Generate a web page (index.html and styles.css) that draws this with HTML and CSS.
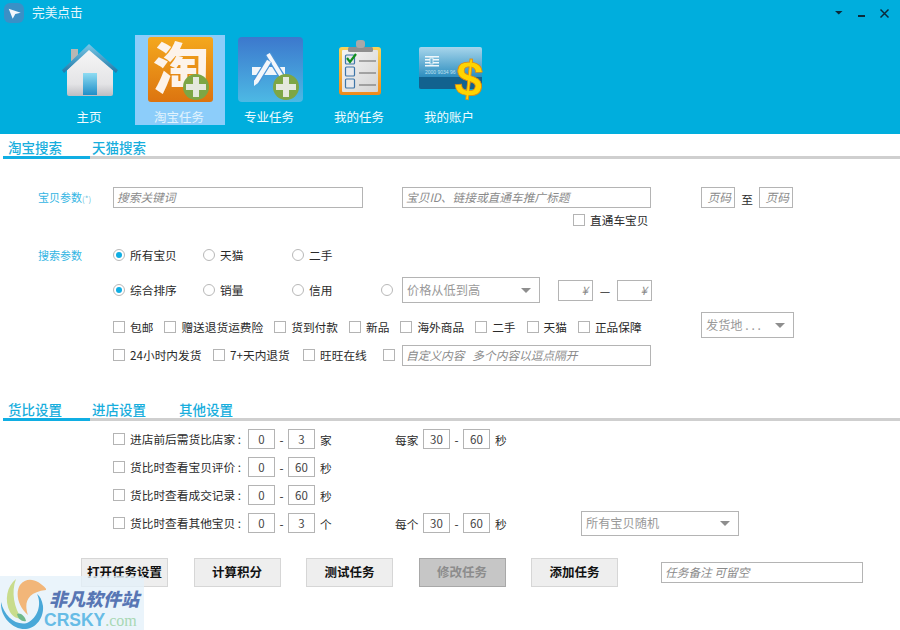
FILE: index.html
```html
<!DOCTYPE html>
<html lang="zh-CN">
<head>
<meta charset="utf-8">
<title>完美点击</title>
<link rel="stylesheet" href="styles.css">
</head>
<body>
<div class="app">
  <header class="head">
    <div class="titlebar">
      <svg class="logo" viewBox="0 0 20 20"><rect x="0" y="0" width="20" height="20" rx="6" fill="#3a90c6"/><path d="M4.700 5.700 L16.700 9.700 L11.300 11 L8.700 15.700 Z" fill="#f2f8fc"/></svg>
      <span class="title">完美点击</span>
      <div class="controls">
        <svg class="ctl" viewBox="0 0 23 20"><path d="M9 7 H16.500 L12.750 10.500 Z" fill="#0b2a3a"/></svg>
        <svg class="ctl" viewBox="0 0 23 20"><rect x="9" y="11" width="7" height="2" fill="#0b2a3a"/></svg>
        <svg class="ctl" viewBox="0 0 23 20"><path d="M8.500 5.500 L16.500 13.500 M16.500 5.500 L8.500 13.500" stroke="#0b2a3a" stroke-width="1.500" fill="none"/></svg>
      </div>
    </div>
    <nav class="nav">
      <a class="nav-item">
        <svg class="nav-icon" viewBox="0 0 90 66">
          <defs>
            <linearGradient id="wall" x1="0" y1="0" x2="0" y2="1"><stop offset="0" stop-color="#f7f7f8"/><stop offset="0.75" stop-color="#e4e4e6"/><stop offset="1" stop-color="#bdbdc2"/></linearGradient>
            <linearGradient id="door" x1="0" y1="0" x2="0" y2="1"><stop offset="0" stop-color="#8fdcf2"/><stop offset="1" stop-color="#1f8fc8"/></linearGradient>
            <linearGradient id="roof" x1="0" y1="0" x2="0" y2="1"><stop offset="0" stop-color="#7cc8e6"/><stop offset="1" stop-color="#1f78a8"/></linearGradient>
          </defs>
          <rect x="26" y="13" width="7" height="12" fill="#b7b7b4"/>
          <path d="M44 12 L68 34 V58 Q68 60 66 60 H24 Q22 60 22 58 V34 Z" fill="url(#wall)"/>
          <path d="M44 8 L73 34 L71 37 L44 14 L19 37 L17 34 Z" fill="url(#roof)"/>
          <rect x="38" y="37" width="14" height="22" fill="url(#door)"/>
        </svg>
        <span class="nav-label">主页</span>
      </a>
      <a class="nav-item active">
        <svg class="nav-icon" viewBox="0 0 90 66">
          <defs>
            <linearGradient id="tao" x1="0" y1="0" x2="0" y2="1"><stop offset="0" stop-color="#f4a81d"/><stop offset="1" stop-color="#dc7410"/></linearGradient>
          </defs>
          <rect x="13" y="1" width="65" height="65" rx="3" fill="url(#tao)"/>
          <text x="46" y="53" class="tao-glyph">淘</text>
          <circle cx="61" cy="51" r="13" fill="#7da645"/>
          <path d="M58 41 H64 V48 H71 V54 H64 V61 H58 V54 H51 V48 H58 Z" fill="#e4e9dd"/>
        </svg>
        <span class="nav-label">淘宝任务</span>
      </a>
      <a class="nav-item">
        <svg class="nav-icon" viewBox="0 0 90 66">
          <defs>
            <linearGradient id="appb" x1="0" y1="0" x2="0" y2="1"><stop offset="0" stop-color="#3c78cd"/><stop offset="1" stop-color="#4db9e4"/></linearGradient>
          </defs>
          <rect x="13" y="1" width="65" height="65" rx="4" fill="url(#appb)"/>
          <rect x="27" y="31" width="33" height="8" fill="#f2f6fa"/>
          <path d="M43 18 L59 44" stroke="#4a94d8" stroke-width="6.500" fill="none"/>
          <path d="M43 18 L59 44" stroke="#f4f7fb" stroke-width="4" fill="none"/>
          <path d="M44 25 L31 46" stroke="#4a94d8" stroke-width="7" fill="none"/>
          <path d="M44 25 L31 46" stroke="#f4f7fb" stroke-width="4.500" fill="none"/>
          <path d="M29 44 L33 47 L29 50 Z" fill="#f4f7fb"/>
          <circle cx="61" cy="51" r="13" fill="#7da645"/>
          <path d="M58 41 H64 V48 H71 V54 H64 V61 H58 V54 H51 V48 H58 Z" fill="#e4e9dd"/>
        </svg>
        <span class="nav-label">专业任务</span>
      </a>
      <a class="nav-item">
        <svg class="nav-icon" viewBox="0 0 90 66">
          <defs>
            <linearGradient id="board" x1="0" y1="0" x2="0" y2="1"><stop offset="0" stop-color="#f7d35a"/><stop offset="1" stop-color="#ef8a1c"/></linearGradient>
            <linearGradient id="sheet" x1="0" y1="0" x2="1" y2="1"><stop offset="0" stop-color="#f4f4f4"/><stop offset="1" stop-color="#d4d4d4"/></linearGradient>
          </defs>
          <rect x="24" y="11" width="42" height="48" rx="3" fill="url(#board)"/>
          <rect x="27" y="14" width="36" height="42" rx="1" fill="url(#sheet)"/>
          <rect x="33" y="11" width="25" height="5" rx="1.500" fill="#8f8f8f"/>
          <rect x="41" y="4" width="9" height="8" rx="3" fill="#a8a8a8"/>
          <g fill="#e6e8ec" stroke="#3f76a8" stroke-width="1.200">
            <rect x="30.500" y="19" width="9" height="9" rx="1"/>
            <rect x="30.500" y="31" width="9" height="9" rx="1"/>
            <rect x="30.500" y="43" width="9" height="9" rx="1"/>
          </g>
          <path d="M32 22 L35 26 L41 18" stroke="#0f8f1d" stroke-width="2.200" fill="none"/>
          <g stroke="#777" stroke-width="1.200">
            <path d="M44 25 H61"/>
            <path d="M44 37 H61"/>
            <path d="M44 49 H61"/>
          </g>
        </svg>
        <span class="nav-label">我的任务</span>
      </a>
      <a class="nav-item">
        <svg class="nav-icon" viewBox="0 0 90 66">
          <defs>
            <linearGradient id="card" x1="0" y1="0" x2="0" y2="1"><stop offset="0" stop-color="#a8d6ec"/><stop offset="0.7" stop-color="#2f8fc0"/><stop offset="1" stop-color="#2a83b4"/></linearGradient>
          </defs>
          <rect x="14" y="11" width="63" height="42" rx="2" fill="url(#card)"/>
          <path d="M14 41 H77 V51 Q77 53 75 53 H16 Q14 53 14 51 Z" fill="#12628f"/>
          <g fill="#eef7fb">
            <rect x="20" y="20" width="14" height="1.500"/>
            <rect x="20" y="23" width="5" height="1.500"/>
            <rect x="28" y="23" width="6" height="1.500"/>
            <rect x="20" y="26" width="5" height="1.500"/>
            <rect x="28" y="26" width="6" height="1.500"/>
            <rect x="20" y="29" width="14" height="1.500"/>
            <rect x="25" y="22" width="3" height="6" fill="none" stroke="#eef7fb" stroke-width="0.800"/>
          </g>
          <text x="20" y="38" class="card-no">2000 9034 96</text>
          <text x="64" y="60" class="dollar" transform="rotate(6 64 45)">$</text>
        </svg>
        <span class="nav-label">我的账户</span>
      </a>
    </nav>
  </header>

  <div class="tabs tabs-top">
    <span class="tab active">淘宝搜索</span>
    <span class="tab">天猫搜索</span>
  </div>

  <section class="search">
    <div class="row row-keys">
      <span class="field-label">宝贝参数<small>(*)</small></span>
      <span class="input ph w250">搜索关键词</span>
      <div class="stack">
        <span class="input ph w249">宝贝ID、链接或直通车推广标题</span>
        <label class="check check-right"><i class="cb"></i>直通车宝贝</label>
      </div>
      <span class="input ph page">页码</span>
      <span class="to">至</span>
      <span class="input ph page">页码</span>
    </div>

    <div class="row row-scope">
      <span class="field-label">搜索参数</span>
      <label class="radio col-a"><i class="rb on"></i>所有宝贝</label>
      <label class="radio col-b"><i class="rb"></i>天猫</label>
      <label class="radio"><i class="rb"></i>二手</label>
    </div>

    <div class="row row-sort">
      <label class="radio col-a"><i class="rb on"></i>综合排序</label>
      <label class="radio col-b"><i class="rb"></i>销量</label>
      <label class="radio col-c"><i class="rb"></i>信用</label>
      <i class="rb rb-price"></i>
      <span class="select price-sort">价格从低到高<b class="caret"></b></span>
      <span class="input ph price">¥</span>
      <span class="dash">—</span>
      <span class="input ph price">¥</span>
    </div>

    <div class="row row-filter">
      <div class="checks">
        <label class="check"><i class="cb"></i>包邮</label>
        <label class="check"><i class="cb"></i>赠送退货运费险</label>
        <label class="check"><i class="cb"></i>货到付款</label>
        <label class="check"><i class="cb"></i>新品</label>
        <label class="check"><i class="cb"></i>海外商品</label>
        <label class="check"><i class="cb"></i>二手</label>
        <label class="check"><i class="cb"></i>天猫</label>
        <label class="check"><i class="cb"></i>正品保障</label>
      </div>
      <span class="select ship">发货地 . . .<b class="caret"></b></span>
    </div>

    <div class="row row-custom">
      <label class="check w100"><i class="cb"></i>24小时内发货</label>
      <label class="check w90"><i class="cb"></i>7+天内退货</label>
      <label class="check w80"><i class="cb"></i>旺旺在线</label>
      <i class="cb cb-custom"></i>
      <span class="input ph w249">自定义内容&nbsp;&nbsp;&nbsp;多个内容以逗点隔开</span>
    </div>
  </section>

  <div class="tabs tabs-second">
    <span class="tab active">货比设置</span>
    <span class="tab">进店设置</span>
    <span class="tab">其他设置</span>
  </div>

  <section class="compare">
    <div class="cmp-row">
      <label class="check cmp-label"><i class="cb"></i>进店前后需货比店家 :</label>
      <span class="input num">0</span><span class="sep">-</span><span class="input num">3</span><span class="unit">家</span>
      <span class="each">每家</span>
      <span class="input num">30</span><span class="sep">-</span><span class="input num">60</span><span class="unit">秒</span>
    </div>
    <div class="cmp-row">
      <label class="check cmp-label"><i class="cb"></i>货比时查看宝贝评价 :</label>
      <span class="input num">0</span><span class="sep">-</span><span class="input num">60</span><span class="unit">秒</span>
    </div>
    <div class="cmp-row">
      <label class="check cmp-label"><i class="cb"></i>货比时查看成交记录 :</label>
      <span class="input num">0</span><span class="sep">-</span><span class="input num">60</span><span class="unit">秒</span>
    </div>
    <div class="cmp-row">
      <label class="check cmp-label"><i class="cb"></i>货比时查看其他宝贝 :</label>
      <span class="input num">0</span><span class="sep">-</span><span class="input num">3</span><span class="unit">个</span>
      <span class="each">每个</span>
      <span class="input num">30</span><span class="sep">-</span><span class="input num">60</span><span class="unit">秒</span>
      <span class="select random">所有宝贝随机<b class="caret"></b></span>
    </div>
  </section>

  <div class="actions">
    <button class="btn">打开任务设置</button>
    <button class="btn">计算积分</button>
    <button class="btn">测试任务</button>
    <button class="btn disabled">修改任务</button>
    <button class="btn">添加任务</button>
    <span class="input ph note">任务备注 可留空</span>
  </div>

  <div class="watermark">
    <svg class="wm-logo" viewBox="0 0 46 54">
      <path d="M47 14 C40 5 28 -1 20 9 C15 17 18 31 28 39 C24 28 26 16 47 14 Z" fill="#f2b679"/>
      <path d="M16 3 C7 10 4 24 10 36 C13 41 18 43 22 43 C14 32 11 16 16 3 Z" fill="#c8dc8c"/>
      <path d="M17 38 C20 36 25 40 26 45 C22 46 18 43 17 38 Z" fill="#6fb98a"/>
      <path d="M1 26 C0 42 14 54 26 53 C36 52 44 42 43 30 C42 24 40 20 37 18 C42 28 38 42 27 47 C16 50 4 40 1 26 Z" fill="#49a8d8"/>
    </svg>
    <div class="wm-text">
      <span class="wm-cn">非凡软件站</span>
      <span class="wm-en">CRSKY<em>.com</em></span>
    </div>
  </div>
</div>
</body>
</html>
```

FILE: styles.css
```css
* { box-sizing: border-box; }
html, body { margin: 0; padding: 0; }
body {
  width: 900px;
  height: 630px;
  overflow: hidden;
  background: #fff;
  font-family: "Noto Sans CJK SC", "Noto Sans", sans-serif;
  font-size: 11.700px;
  color: #2a2a2a;
}
.app { position: relative; width: 900px; height: 630px; overflow: hidden; }

/* header */
.head { height: 134px; background: #00aedd; color: #fff; }
.titlebar { height: 35px; display: flex; align-items: flex-start; padding: 3px 5px 0 4px; }
.logo { width: 20px; height: 20px; flex: none; }
.title { margin: 0 0 0 8px; line-height: 18px; font-size: 12.700px; color: #e6f7fc; }
.controls { margin-left: auto; display: flex; padding-top: 1px; }
.ctl { width: 23px; height: 20px; display: block; }
.nav { display: flex; padding-left: 45px; }
.nav-item { width: 90px; height: 90px; display: flex; flex-direction: column; align-items: center; padding-top: 1px; }
.nav-item.active { background: #8ccdfa; }
.nav-icon { width: 90px; height: 66px; display: block; flex: none; overflow: visible; }
.nav-label { margin: 6px 2px 0 0; line-height: 18px; font-size: 12.500px; color: #f2fbfe; }
.nav-item.active .nav-label { color: #e2f3fd; }
.tao-glyph { font-size: 56px; font-weight: 900; fill: #fdf3ea; text-anchor: middle; font-family: "Noto Sans CJK SC", sans-serif; }
.card-no { font-size: 5px; fill: #bfe0ef; font-family: "Liberation Sans", sans-serif; }
.dollar { font-size: 50px; font-weight: 700; fill: #ffd400; stroke: #e08a10; stroke-width: 0.800; text-anchor: middle; font-family: "Liberation Sans", sans-serif; }

/* tabs */
.tabs {
  display: flex;
  margin-left: 3px;
  height: 25px;
  border-bottom: 3px solid #cfcfcf;
  font-size: 13.500px;
  font-weight: 500;
  color: #18aedd;
}
.tab { width: 87px; padding-left: 2px; line-height: 26px; height: 25px; flex: none; }
.tab.active { padding-left: 5px; border-bottom: 3px solid #10aee3; }

/* search form */
.search { height: 237px; padding-top: 28px; }
.row { display: flex; }
.row-keys { height: 59px; padding-left: 38px; align-items: flex-start; }
.field-label { width: 75px; flex: none; color: #33b5e3; font-size: 11px; line-height: 21px; }
.field-label small { font-size: 8px; color: #6fc2de; }
.input {
  display: inline-flex;
  align-items: center;
  flex: none;
  height: 21px;
  border: 1px solid #b4b4b4;
  background: #fff;
  line-height: 17px;
}
.ph { padding: 0 3px 2px; color: #8a8a8a; font-style: italic; }
.w250 { width: 250px; }
.w249 { width: 249px; }
.stack { width: 299px; margin-left: 39px; flex: none; display: flex; flex-direction: column; }
.check-right { margin: 3px 0 0 171px; }
.page { width: 34px; justify-content: flex-end; }
.to { width: 24px; text-align: center; line-height: 23px; flex: none; }
.row-scope { height: 18px; padding-left: 38px; align-items: center; }
.row-scope .field-label { line-height: 18px; }
.radio { display: inline-flex; align-items: center; gap: 5px; line-height: 18px; flex: none; }
.col-a { width: 90px; }
.col-b { width: 89px; }
.col-c { width: 89px; }
.rb {
  display: block;
  flex: none;
  position: relative;
  width: 12px;
  height: 12px;
  border: 1px solid #b8b8b8;
  border-radius: 50%;
  background: #fff;
}
.rb.on::after {
  content: "";
  position: absolute;
  left: 2px;
  top: 2px;
  width: 6px;
  height: 6px;
  border-radius: 50%;
  background: #10aee3;
}
.row-sort { height: 44px; margin-top: 4px; padding-left: 113px; align-items: center; }
.rb-price { margin-right: 9px; }
.select {
  display: inline-flex;
  align-items: center;
  flex: none;
  height: 26px;
  padding-left: 4px;
  border: 1px solid #b4b4b4;
  background: #fff;
  color: #999;
  font-size: 12.200px;
}
.caret {
  margin-left: auto;
  margin-right: 8px;
  border-left: 5px solid transparent;
  border-right: 5px solid transparent;
  border-top: 5px solid #8e8e8e;
}
.price-sort { width: 138px; margin-right: 18px; }
.price { width: 35px; justify-content: flex-end; padding-right: 4px; }
.dash { width: 24px; text-align: center; flex: none; }
.row-filter { height: 30px; padding-left: 113px; align-items: center; }
.checks { display: flex; align-items: center; gap: 11px; width: 588px; flex: none; }
.check { display: inline-flex; align-items: center; gap: 5px; line-height: 18px; flex: none; }
.cb {
  display: block;
  flex: none;
  width: 12px;
  height: 12px;
  border: 1px solid #b4b4b4;
  background: #fff;
}
.ship { width: 93px; align-self: flex-start; }
.row-custom { height: 26px; padding-left: 113px; align-items: center; }
.w100 { width: 100px; }
.w90 { width: 90px; }
.w80 { width: 80px; }
.cb-custom { margin-right: 7px; }

/* compare section */
.compare { padding-top: 4px; height: 137px; }
.cmp-row { display: flex; align-items: center; height: 28px; padding-left: 113px; }
.cmp-label { width: 135px; white-space: nowrap; }
.num { width: 27px; height: 20px; justify-content: center; color: #444; font-size: 11.500px; }
.sep { width: 13px; text-align: center; flex: none; }
.unit { margin-left: 5px; width: 12px; flex: none; }
.each { margin-left: 63px; width: 28px; flex: none; white-space: nowrap; }
.random { width: 158px; height: 25px; margin-left: 74px; }

/* buttons */
.actions { display: flex; align-items: center; height: 29px; padding-left: 81px; gap: 25.500px; }
.btn {
  width: 87px;
  height: 29px;
  padding: 0 0 2px;
  flex: none;
  border: 1px solid #d6d6d6;
  background: #eeeeee;
  color: #111;
  font: 700 12.500px "Noto Sans CJK SC", sans-serif;
}
.btn.disabled { background: #c6c6c6; border-color: #a8a8a8; color: #8c8c8c; }
.note { width: 202px; margin-left: 17.500px; }

/* watermark overlay */
.watermark {
  position: absolute;
  left: 0;
  bottom: 0;
  width: 144px;
  height: 54px;
  background: rgba(228, 241, 250, 0.780);
  display: flex;
  align-items: flex-end;
}
.wm-logo { width: 46px; height: 54px; flex: none; }
.wm-text { display: flex; flex-direction: column; margin-left: 3px; }
.wm-cn { font-size: 18px; line-height: 24px; font-weight: 900; font-style: italic; color: #5876b4; white-space: nowrap; }
.wm-en { margin-left: -5px; font: 700 17.500px/20px "Liberation Sans", sans-serif; color: #67bce6; white-space: nowrap; }
.wm-en em { font: 400 16px "Liberation Serif", serif; color: #a8d8b4; }
```
